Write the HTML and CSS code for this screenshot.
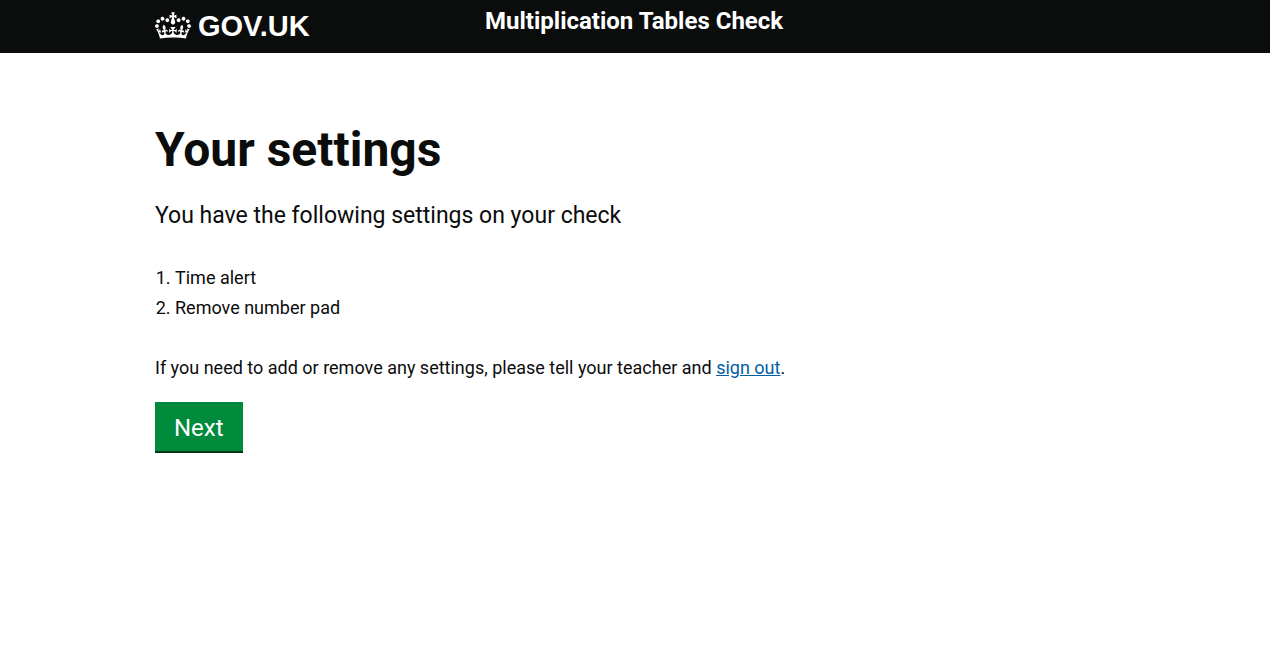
FILE: index.html
```html
<!DOCTYPE html>
<html lang="en">
<head>
<meta charset="utf-8">
<meta name="viewport" content="width=device-width, initial-scale=1">
<title>Your settings - Multiplication Tables Check</title>
<link rel="stylesheet" href="styles.css">
</head>
<body>
<header class="header">
  <div class="header-inner container">
    <a class="logo" href="#">
      <svg class="crown" viewBox="0 0 132 97" aria-hidden="true"><path fill="currentColor" fill-rule="evenodd" d="M25 30.2c3.5 1.5 7.7-.2 9.1-3.7 1.5-3.6-.2-7.8-3.9-9.2-3.6-1.4-7.6.3-9.1 3.9-1.4 3.5.3 7.5 3.9 9zM9 39.5c3.6 1.5 7.8-.2 9.2-3.7 1.5-3.6-.2-7.8-3.9-9.1-3.6-1.5-7.6.2-9.1 3.8-1.4 3.5.3 7.5 3.8 9zM4.4 57.2c3.5 1.5 7.7-.2 9.1-3.8 1.5-3.6-.2-7.7-3.9-9.1-3.5-1.5-7.6.3-9.1 3.8-1.4 3.5.3 7.6 3.9 9.1zm38.3-21.4c3.5 1.5 7.7-.2 9.1-3.8 1.5-3.6-.2-7.7-3.9-9.1-3.6-1.5-7.6.3-9.1 3.8-1.3 3.6.4 7.7 3.9 9.1zm64.4-5.6c-3.6 1.5-7.8-.2-9.1-3.7-1.5-3.6.2-7.8 3.8-9.2 3.6-1.4 7.7.3 9.2 3.9 1.3 3.5-.4 7.5-3.9 9zm15.9 9.3c-3.6 1.5-7.7-.2-9.1-3.7-1.5-3.6.2-7.8 3.7-9.1 3.6-1.5 7.7.2 9.2 3.8 1.5 3.5-.3 7.5-3.8 9zm4.7 17.7c-3.6 1.5-7.8-.2-9.2-3.8-1.5-3.6.2-7.7 3.9-9.1 3.6-1.5 7.7.3 9.2 3.8 1.3 3.5-.4 7.6-3.9 9.1zM89.3 35.8c-3.6 1.5-7.8-.2-9.2-3.8-1.4-3.6.2-7.7 3.9-9.1 3.6-1.5 7.7.3 9.2 3.8 1.4 3.6-.3 7.7-3.9 9.1zM69.7 17.7l8.9 4.7V9.3l-8.9 2.8c-.2-.3-.5-.6-.9-.9L72.4 0H59.6l3.5 11.2c-.3.3-.6.5-.9.9l-8.8-2.8v13.1l8.8-4.7c.3.3.6.7.9.9l-5 15.4v.1c-.2.8-.4 1.6-.4 2.4 0 4.1 3.1 7.5 7 8.1h.2c.3 0 .7.1 1 .1.4 0 .7 0 1-.1h.2c4-.6 7.1-4.1 7.1-8.1 0-.8-.1-1.7-.4-2.4V34l-5.1-15.4c.4-.2.7-.6 1-.9zM66 92.8c16.9 0 32.8 1.1 47.1 3.2 4-16.9 8.9-26.7 14-33.5l-9.6-3.4c1 4.9 1.1 7.2 0 10.2-1.5-1.4-3-4.3-4.2-8.7L108.6 76c2.8-2 5-3.2 7.5-3.3-4.4 9.4-10 11.9-13.6 11.2-4.3-.8-6.3-4.6-5.6-7.9 1-4.7 5.7-5.9 8-.5 4.3-8.7-3-11.4-7.6-8.8 7.1-7.2 7.9-13.5 2.1-21.1-8 6.1-8.1 12.3-4.5 20.8-4.7-5.4-12.1-2.5-9.5 6.2 3.4-5.2 7.9-2 7.2 3.1-.6 4.3-6.4 7.8-13.5 7.2-10.3-.9-10.9-8-11.2-13.8 2.5-.5 7.1 1.8 11 7.3L80.2 60c-4.1 4.4-8 5.3-12.3 5.4 1.4-4.4 8-11.6 8-11.6H55.5s6.4 7.2 7.9 11.6c-4.2-.1-8-1-12.3-5.4l1.4 16.4c3.9-5.5 8.5-7.7 10.9-7.3-.3 5.8-.9 12.8-11.1 13.8-7.2.6-12.9-2.9-13.5-7.2-.7-5 3.8-8.3 7.1-3.1 2.7-8.7-4.6-11.6-9.4-6.2 3.7-8.5 3.6-14.7-4.6-20.8-5.8 7.6-5 13.9 2.2 21.1-4.7-2.6-11.9.1-7.7 8.8 2.3-5.5 7.1-4.2 8.1.5.7 3.3-1.3 7.1-5.7 7.9-3.5.7-9-1.8-13.5-11.2 2.5.1 4.7 1.3 7.5 3.3l-4.7-15.4c-1.2 4.4-2.7 7.2-4.3 8.7-1.1-3-.9-5.3 0-10.2l-9.5 3.4c5 6.9 9.9 16.7 14 33.5 14.8-2.1 30.8-3.2 47.7-3.2z"/></svg>
      <span class="logo-text">GOV.UK</span>
    </a>
    <span class="service-name">Multiplication Tables Check</span>
  </div>
</header>
<main class="container content">
  <h1 class="title">Your settings</h1>
  <p class="lede">You have the following settings on your check</p>
  <ol class="settings">
    <li>Time alert</li>
    <li>Remove number pad</li>
  </ol>
  <p class="note">If you need to add or remove any settings, please tell your teacher and <a class="link" href="#">sign out</a>.</p>
  <button class="button" type="button">Next</button>
</main>
</body>
</html>
```
FILE: styles.css
```css
body {
  margin: 0;
  background: #fff;
  color: #0b0c0c;
  font-family: Roboto, "Liberation Sans", sans-serif;
  font-size: 18px;
  line-height: 30px;
}

.container {
  max-width: 960px;
  margin: 0 auto;
}

.header {
  background: #0b0c0c;
  color: #fff;
}

.header-inner {
  display: grid;
  grid-template-columns: 330px 1fr;
  align-items: start;
  padding: 6px 0 7px;
}

.logo {
  display: flex;
  align-items: center;
  gap: 7px;
  height: 38px;
  margin-bottom: 2px;
  color: #fff;
  text-decoration: none;
}

.crown {
  width: 36px;
  height: 27px;
}

.logo-text {
  font-family: "Liberation Sans", Arial, sans-serif;
  font-size: 29px;
  font-weight: 700;
  line-height: 36px;
  padding-top: 2px;
}

.service-name {
  font-size: 24px;
  font-weight: 700;
}

.content {
  padding-top: 72px;
}

.title {
  margin: 0 0 26px;
  font-size: 48px;
  font-weight: 700;
  line-height: 50px;
}

.lede {
  margin: 0 0 32px;
  font-size: 23px;
}

.settings {
  margin: 0 0 30px;
  padding-left: 20px;
}

.note {
  margin: 0 0 19px;
}

.link {
  color: #005ea5;
}

.button {
  padding: 11px 19px 8px;
  border: 0;
  border-bottom: 2px solid #003618;
  background: #008a3c;
  color: #fff;
  font: inherit;
  font-size: 24px;
}
```
